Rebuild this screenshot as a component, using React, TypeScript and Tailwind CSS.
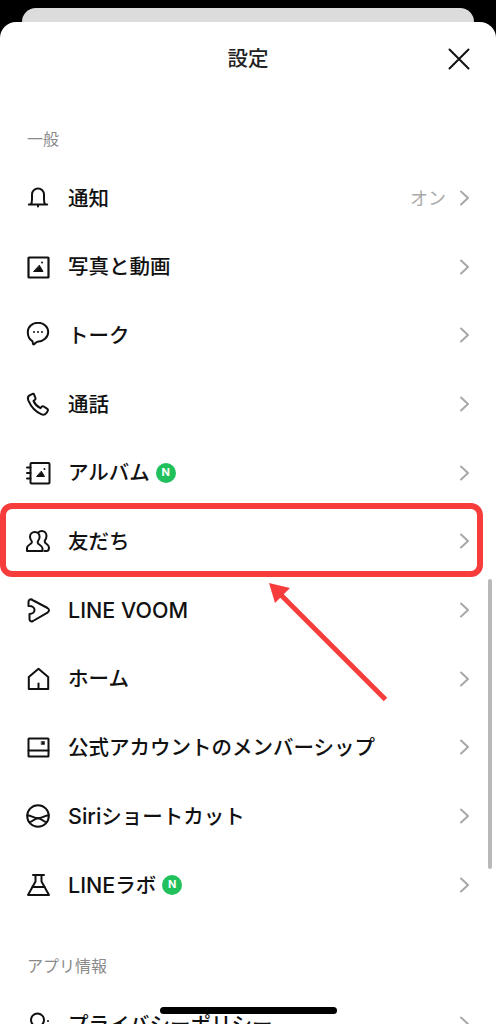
import React from 'react';

const stroke = {
  fill: 'none',
  stroke: '#111',
  strokeWidth: 2,
  strokeLinecap: 'round' as const,
  strokeLinejoin: 'round' as const,
};

const Icon = ({ children }: { children: React.ReactNode }) => (
  <svg width="26" height="26" viewBox="0 0 26 26" className="shrink-0" {...stroke}>
    {children}
  </svg>
);

const icons: Record<string, React.ReactNode> = {
  bell: (
    <>
      <path d="M3.800 19.500h18.400M5.800 19.500c1.200-1.500 1.200-3 1.200-5V9.500a6 6 0 0 1 12 0v5c0 2 0 3.500 1.200 5" />
      <path d="M13 20v1.500" />
    </>
  ),
  photo: (
    <>
      <rect x="3.500" y="3.500" width="20" height="20" rx="0.5" strokeWidth="2.200" />
      <path d="M9 17.500h9l-3.500-6z" fill="#111" strokeWidth="1" />
      <circle cx="17" cy="8.500" r="1" fill="#111" stroke="none" />
    </>
  ),
  talk: (
    <g transform="translate(0 -2)">
      <path d="M13 2.800c5.800 0 10.200 4 10.200 9.200 0 5.400-4.800 9.400-10.600 9.800-1.300.1-3.400 2.700-4.200 2.700-.9 0-.3-2.700-1.100-3.400C4.300 19.400 2.800 16 2.800 12c0-5.200 4.400-9.200 10.200-9.200z" />
      <circle cx="9" cy="12" r="1" fill="#111" stroke="none" />
      <circle cx="13" cy="12" r="1" fill="#111" stroke="none" />
      <circle cx="17" cy="12" r="1" fill="#111" stroke="none" />
    </g>
  ),
  phone: (
    <path d="M7.500 2.800 4.200 4.600C2.800 5.600 2.600 7.400 3.300 9.300c3 7 7.400 11.500 13.300 14 1.700.7 3.600.2 4.700-1.200l1.400-2.100c.5-.8.300-1.700-.4-2.200l-3.500-2.300c-.7-.4-1.500-.4-2 .2l-1.300 1.500c-3.200-1.500-5.600-4-7-7.200l1.500-1.200c.6-.5.700-1.300.4-2L8.900 3.200c-.3-.5-.9-.7-1.400-.4z" />
  ),
  album: (
    <>
      <rect x="5.500" y="3" width="19" height="20.500" rx="1" />
      <path d="M2 7.500h3.500M2 13h3.500M2 18.500h3.500" />
      <path d="M12 16.500h7.500l-3-5z" fill="#111" strokeWidth="1" />
      <circle cx="19.500" cy="9" r="1" fill="#111" stroke="none" />
    </>
  ),
  friends: (
    <>
      <path d="M9.800 4C7 4 5 6 5 8.800c0 2 .9 3.500 1.800 4.500v1.200c0 1.500-4.800 2.500-4.800 5.500V23h15.500v-2.500c0-3-4.700-4-4.700-5.500v-1.700c.9-1 1.800-2.500 1.800-4.500C14.600 6 12.600 4 9.800 4z" />
      <path d="M13.300 4.500c.9-1 2.200-1.500 3.500-1.500 2.800 0 4.700 2.200 4.700 5 0 2-.9 3.500-1.700 4.500V14c0 1.500 4.200 2.500 4.200 5.500 0 2-.5 3.500-2.500 3.500h-2" />
    </>
  ),
  voom: (
    <path d="M6.500 2.500 22.500 11c2 1.200 2 3.500 0 4.700L8 24c-2 1-3.500 0-3.500-2v-5c3 0 5-1.800 5-4s-2-4-5-4h-1V5c0-2 1.500-3.300 3.500-2.500z" />
  ),
  home: (
    <>
      <path d="M13.500 2.800 3.800 11v12h19.400V11z" />
      <path d="M13.500 17.500V23" />
    </>
  ),
  membership: (
    <>
      <rect x="3.500" y="4.500" width="20" height="18" rx="0.5" />
      <path d="M3.500 16.500h20" />
      <rect x="16.500" y="7.500" width="3" height="3" fill="#111" strokeWidth="0.5" />
    </>
  ),
  siri: (
    <>
      <circle cx="13" cy="13" r="10.800" />
      <path d="M2.500 12.500c4 0 6.500 2.800 10.500 2.800s6.500-2.800 10.500-2.800" />
      <path d="M4.500 19c3 0 5-3.700 8.500-3.700s5.500 3.700 8.500 3.700" />
    </>
  ),
  lab: (
    <>
      <path d="M8 3h11M10.500 3v6.500L3 23h21L16.500 9.500V3" />
      <path d="M7.500 15h12" />
    </>
  ),
  pin: (
    <>
      <circle cx="12.500" cy="9" r="6.500" />
      <path d="M3 25c1-5 4-7 9.500-7s8.500 2 9.500 7" />
      <circle cx="23" cy="10" r="1" fill="#111" stroke="none" />
    </>
  ),
};

const Chevron = () => (
  <svg width="11" height="18" viewBox="0 0 11 18" fill="none" stroke="#a8a8a8" strokeWidth="2" strokeLinecap="round" strokeLinejoin="round">
    <path d="M2 2.500l7 6.500-7 6.500" />
  </svg>
);

const NBadge = () => (
  <span className="ml-[6px] flex h-5 w-5 items-center justify-center rounded-full bg-[#20c05c] text-[11px] font-bold leading-none text-white font-['Inter',sans-serif]">
    N
  </span>
);

type RowData = { icon: string; latin?: string; label?: string; value?: string; isNew?: boolean };

const rows: RowData[] = [
  { icon: 'bell', label: '通知', value: 'オン' },
  { icon: 'photo', label: '写真と動画' },
  { icon: 'talk', label: 'トーク' },
  { icon: 'phone', label: '通話' },
  { icon: 'album', label: 'アルバム', isNew: true },
  { icon: 'friends', label: '友だち' },
  { icon: 'voom', latin: 'LINE VOOM' },
  { icon: 'home', label: 'ホーム' },
  { icon: 'membership', label: '公式アカウントのメンバーシップ' },
  { icon: 'siri', latin: 'Siri', label: 'ショートカット' },
  { icon: 'lab', latin: 'LINE', label: 'ラボ', isNew: true },
];

const Row = ({ icon, latin, label, value, isNew }: RowData) => (
  <div className="flex h-[68.7px] items-center pl-[25px] pr-[26px]">
    <Icon>{icons[icon]}</Icon>
    <span className="ml-[17px] pt-[2px] text-[20.500px] font-medium leading-none text-[#111]">
      {latin && <span className="text-[21.500px]">{latin}</span>}
      {label}
    </span>
    {isNew && <NBadge />}
    <div className="ml-auto flex items-center gap-[13px]">
      {value && <span className="pt-[2px] text-[18px] text-[#a8a8a8]">{value}</span>}
      <Chevron />
    </div>
  </div>
);

export default function App() {
  return (
    <div className="relative h-[1024px] w-[496px] overflow-hidden bg-black font-['Inter','Noto_Sans_CJK_JP',sans-serif]">
      <div className="mx-[22px] mt-[8px] h-[30px] rounded-t-[14px] bg-[#dcdcdc]" />
      <div className="absolute inset-x-0 bottom-0 top-[22px] overflow-hidden rounded-t-[16px] bg-white">
        <header className="relative flex h-[74px] items-center justify-center">
          <h1 className="text-[20.500px] font-medium text-[#222]">設定</h1>
          <svg className="absolute right-[26px] top-[26px]" width="22" height="22" viewBox="0 0 22 22" fill="none" stroke="#111" strokeWidth="2" strokeLinecap="round">
            <path d="M1.500 1.500l19 19M20.500 1.500l-19 19" />
          </svg>
        </header>
        <p className="mt-[33px] pl-[27px] text-[16px] leading-5 text-[#8a8a8a]">一般</p>
        <div className="mt-[14.500px]">
          {rows.map((row) => (
            <Row key={row.icon} {...row} />
          ))}
        </div>
        <p className="mt-[36.500px] pl-[27px] text-[16px] leading-5 text-[#8a8a8a]">アプリ情報</p>
        <div className="mt-[14px]">
          <Row icon="pin" label="プライバシーポリシー" />
        </div>
      </div>

      {/* annotation */}
      <div className="absolute left-0 top-[503px] h-[74px] w-[483px] rounded-[12px] border-[6px] border-[#f73c3c]" />
      <svg className="absolute left-[260px] top-[575px]" width="135" height="135" viewBox="0 0 135 135" fill="none">
        <path d="M125.500 124.500 21 20" stroke="#f73c3c" strokeWidth="5" />
        <path d="M9 8l21 5-15 15z" fill="#f73c3c" />
      </svg>

      {/* scrollbar, home bar */}
      <div className="absolute left-[488px] top-[579px] h-[290px] w-[4px] rounded-full bg-[#b8b8b8]" />
      <div className="absolute left-[160px] top-[1007px] h-[7px] w-[177px] rounded-full bg-black" />
    </div>
  );
}
